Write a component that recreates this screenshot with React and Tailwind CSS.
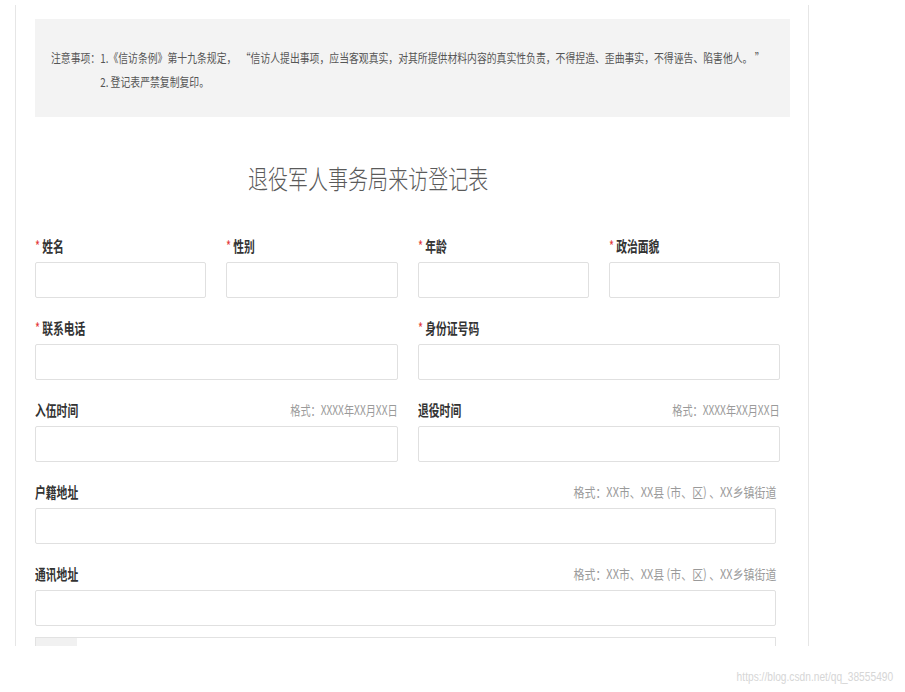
import React from "react";

function Label({ text, required }) {
  return (
    <span className="inline-block whitespace-nowrap origin-left scale-x-[0.72] text-[15px] leading-5 font-bold text-[#333]">
      {required && <span className="text-[#e4393c] font-normal mr-[3px]">*</span>}
      {text}
    </span>
  );
}

function Hint({ text, wide }) {
  return (
    <span
      className={
        wide
          ? "inline-block whitespace-nowrap origin-right scale-x-[0.84] text-[13px] leading-5 text-[#9a9a9a]"
          : "inline-block whitespace-nowrap origin-right scale-x-[0.78] text-[13px] leading-5 text-[#9a9a9a]"
      }
    >
      {text}
    </span>
  );
}

function Field({ label, required, hint, wide }) {
  return (
    <div className="flex flex-col">
      <div className="flex h-5 mb-[6px] items-center justify-between">
        <Label text={label} required={required} />
        {hint && <Hint text={hint} wide={wide} />}
      </div>
      <div className="h-[36px] border border-[#e0e0e0] rounded-[2px] bg-white" />
    </div>
  );
}

export default function App() {
  const dateHint = "格式：XXXX年XX月XX日";
  const addrHint = "格式：XX市、XX县 (市、区) 、XX乡镇街道";
  return (
    <div className="w-[905px] h-[692px] bg-white overflow-hidden font-['Noto_Sans_CJK_SC',sans-serif]">
      <div className="pt-[5px]">
        <div className="ml-[15px] w-[794px] h-[641px] border-x border-[#e6e6e6] overflow-hidden pl-[19px] pr-[17px] pt-[14px]">
          <div className="w-[755px] h-[98px] bg-[#f3f3f3] pl-[16px] pt-[25px] overflow-hidden">
            <div className="inline-flex whitespace-pre origin-left scale-x-[0.82] text-[12px] leading-[24px] text-[#555]">
              <span>注意事项：</span>
              <div className="flex flex-col">
                <span>1.《信访条例》第十九条规定，  “信访人提出事项，应当客观真实，对其所提供材料内容的真实性负责，不得捏造、歪曲事实，不得诬告、陷害他人。 ”</span>
                <span>2. 登记表严禁复制复印。</span>
              </div>
            </div>
          </div>

          <div className="mt-[41px] h-10 flex items-center pl-[213px]">
            <span className="inline-block whitespace-nowrap origin-left scale-x-[0.77] text-[26px] leading-10 font-light text-[#5a5a5a]">
              退役军人事务局来访登记表
            </span>
          </div>

          <div className="mt-[38px] w-[745px] flex flex-col">
            <div className="grid grid-cols-4 gap-x-5">
              <Field label="姓名" required />
              <Field label="性别" required />
              <Field label="年龄" required />
              <Field label="政治面貌" required />
            </div>
            <div className="mt-5 grid grid-cols-2 gap-x-5">
              <Field label="联系电话" required />
              <Field label="身份证号码" required />
            </div>
            <div className="mt-5 grid grid-cols-2 gap-x-5">
              <Field label="入伍时间" hint={dateHint} />
              <Field label="退役时间" hint={dateHint} />
            </div>
            <div className="mt-5 w-[741px]">
              <Field label="户籍地址" hint={addrHint} wide />
            </div>
            <div className="mt-5 w-[741px]">
              <Field label="通讯地址" hint={addrHint} wide />
            </div>
            <div className="mt-[11px] w-[741px] h-[40px] border border-[#e2e2e2] flex">
              <div className="w-[41px] bg-[#f1f1f1]" />
            </div>
          </div>
        </div>
      </div>
      <div className="flex justify-end pr-[12px] pt-[23px]">
        <span className="inline-block whitespace-nowrap origin-right scale-x-[0.85] text-[12px] leading-4 text-[#d6d6d6] font-['Liberation_Sans',sans-serif]">
          https://blog.csdn.net/qq_38555490
        </span>
      </div>
    </div>
  );
}
